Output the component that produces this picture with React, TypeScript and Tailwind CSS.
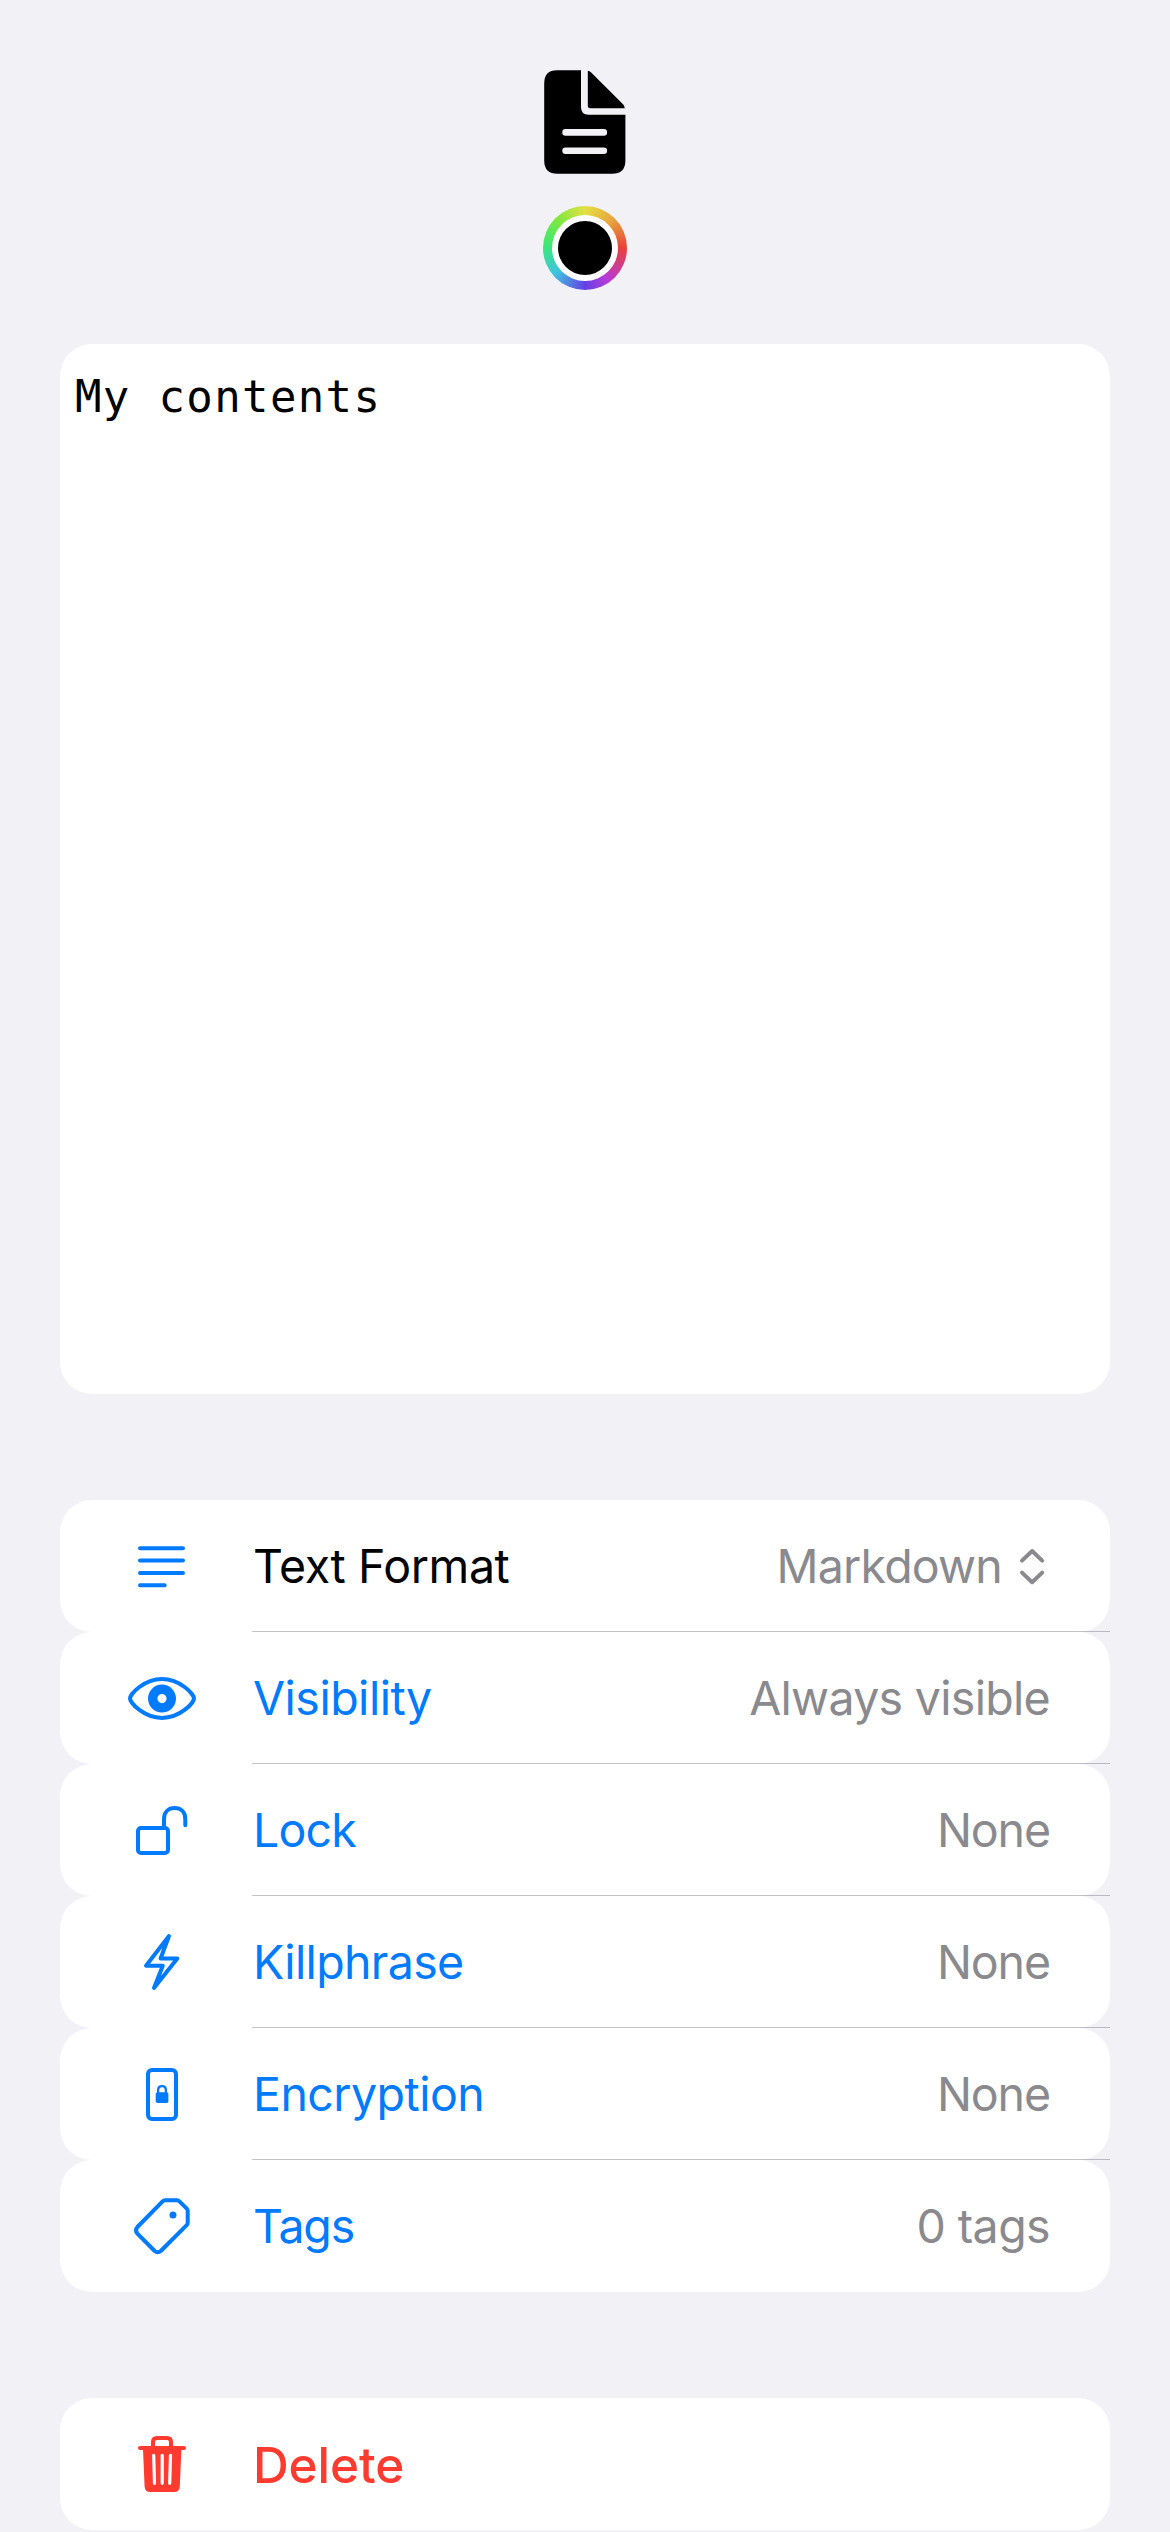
import type { ReactNode } from "react";

const stroke = {
  fill: "none",
  stroke: "currentColor",
  strokeWidth: 4,
  strokeLinecap: "round" as const,
  strokeLinejoin: "round" as const,
};

function Glyph({ children }: { children: ReactNode }) {
  return (
    <svg viewBox="0 0 72 72" className="ml-[66px] h-[72px] w-[72px] shrink-0">
      {children}
    </svg>
  );
}

const TextIcon = () => (
  <Glyph>
    <path {...stroke} d="M14 18.3H57M14 30.6H57M14 42.9H57M14 55.2H38.7" />
  </Glyph>
);

const EyeIcon = () => (
  <Glyph>
    <path
      {...stroke}
      d="M4 36.4C4 32.5 17.5 17 36 17S68 32.5 68 36.4C68 40.4 54.5 55.9 36 55.9S4 40.4 4 36.4Z"
    />
    <circle cx="36" cy="36.6" r="9.3" fill="none" stroke="currentColor" strokeWidth="9.4" />
  </Glyph>
);

const LockIcon = () => (
  <Glyph>
    <rect {...stroke} x="12" y="34" width="30" height="25" rx="3" />
    <path {...stroke} d="M38 34V25C38 18 42.5 14 48.7 14S59.3 18 59.3 25V31.2" />
  </Glyph>
);

const BoltIcon = () => (
  <Glyph>
    <path {...stroke} d="M43 10L20 39.7H36.8L28 62L51.3 32.5H34.6Z" />
  </Glyph>
);

const PhoneLockIcon = () => (
  <Glyph>
    <rect {...stroke} x="22" y="12" width="28" height="49" rx="4" />
    <rect x="29.7" y="34.2" width="12.7" height="10.8" rx="1.8" fill="currentColor" />
    <path
      d="M32.1 35.5V32.5C32.1 29.8 33.8 28.2 36 28.2S39.9 29.8 39.9 32.5V35.5"
      fill="none"
      stroke="currentColor"
      strokeWidth="2.3"
    />
  </Glyph>
);

const TagIcon = () => (
  <Glyph>
    <path
      {...stroke}
      d="M39 10.3H51Q52.4 10.3 53.4 11.3L60.8 18.7Q61.7 19.6 61.7 21V32.8Q61.7 34.2 60.7 35.2L34.8 61Q31.7 63.5 28.7 61L11.4 43.6Q8.6 40 11.4 37L36.6 11.3Q37.6 10.3 39 10.3Z"
    />
    <circle cx="47" cy="25" r="3.5" fill="currentColor" />
  </Glyph>
);

const TrashIcon = () => (
  <Glyph>
    <path {...stroke} d="M14 20H58M27 20V14Q27 10 31 10H41Q45 10 45 14V20" />
    <path d="M17 21H55.4L53.8 58.5Q53.4 64 48.2 64H24.2Q19 64 18.6 58.5Z" fill="currentColor" />
    <path
      d="M27.7 27.3L28.5 55.3M36.2 27.3V55.3M44.5 27.3L43.7 55.3"
      fill="none"
      stroke="white"
      strokeWidth="3.2"
      strokeLinecap="round"
    />
  </Glyph>
);

function DocumentIcon() {
  return (
    <svg viewBox="0 0 82 104" className="h-[104px] w-[82px]">
      <path d="M13 .2H37V37Q37 44.8 44.5 44.8H81.4V90.5Q81.4 103.8 68 103.8H13.5Q.2 103.8 .2 90.5V13.5Q.2 .2 13 .2Z" />
      <path d="M43.8 .8Q45.5 .9 47.2 2.5L79 34.2Q80.7 36.2 80.8 38.2H46Q43.8 38.2 43.8 36Z" />
      <path d="M21.6 62.4H59.8M21.6 80.8H59.8" stroke="#f2f1f6" strokeWidth="6.6" strokeLinecap="round" />
    </svg>
  );
}

function ColorWell() {
  return (
    <div className="flex h-[84px] w-[84px] items-center justify-center rounded-full bg-[conic-gradient(#e4e044,#e8a33c_45deg,#e8413a_90deg,#b83ad8_145deg,#6440e4_180deg,#40c4e0_230deg,#3ae67e_270deg,#7ae83e_315deg,#e4e044)]">
      <div className="flex h-[66px] w-[66px] items-center justify-center rounded-full bg-white">
        <div className="h-[54px] w-[54px] rounded-full bg-black" />
      </div>
    </div>
  );
}

type RowProps = {
  icon: ReactNode;
  label: string;
  labelClass: string;
  value?: string;
  valueClass?: string;
  picker?: boolean;
  divider?: boolean;
};

function Row({ icon, label, labelClass, value, valueClass = "", picker, divider }: RowProps) {
  return (
    <div>
      <div className="flex h-[132px] items-center rounded-[32px] bg-white pr-[60px]">
        {icon}
        <span className={`ml-[55px] whitespace-nowrap ${labelClass}`}>{label}</span>
        <div className="ml-auto flex items-center text-[#8a8a8e]">
          <span className={`whitespace-nowrap ${valueClass}`}>{value}</span>
          {picker && (
            <svg viewBox="0 0 28 40" className="mr-[4px] ml-[16px] h-[40px] w-[28px]">
              <path {...stroke} d="M4 14.6L14.1 5L24.2 14.6M4 26.6L14.1 36.2L24.2 26.6" />
            </svg>
          )}
        </div>
      </div>
      {divider && <div className="-mt-px ml-[192px] h-px bg-[#3c3c434d]" />}
    </div>
  );
}

const blue = "text-[#007aff]";

export default function App() {
  return (
    <div className="flex h-[2532px] w-[1170px] flex-col overflow-hidden bg-[#f2f1f6] px-[60px] pt-[70px] font-['Inter',sans-serif] text-[46.5px] leading-[60px]">
      <div className="flex flex-col items-center gap-8">
        <DocumentIcon />
        <ColorWell />
      </div>

      <div className="mt-[54px] h-[1050px] shrink-0 rounded-[32px] bg-white px-[15px] pt-[23px] font-['DejaVu_Sans_Mono',monospace] text-[44px] tracking-[1.35px] text-black">
        My contents
      </div>

      <div className="mt-[106px]">
        <Row icon={<span className={blue}><TextIcon /></span>} label="Text Format" labelClass="text-black tracking-[-0.4px]" value="Markdown" valueClass="tracking-[-0.8px]" picker divider />
        <Row icon={<span className={blue}><EyeIcon /></span>} label="Visibility" labelClass="text-[#007aff] tracking-[-0.5px]" value="Always visible" valueClass="tracking-[-0.7px]" divider />
        <Row icon={<span className={blue}><LockIcon /></span>} label="Lock" labelClass="text-[#007aff] tracking-[-0.8px]" value="None" valueClass="tracking-[-1.1px]" divider />
        <Row icon={<span className={blue}><BoltIcon /></span>} label="Killphrase" labelClass="text-[#007aff] tracking-[-0.65px]" value="None" valueClass="tracking-[-1.1px]" divider />
        <Row icon={<span className={blue}><PhoneLockIcon /></span>} label="Encryption" labelClass="text-[#007aff] tracking-[-0.55px]" value="None" valueClass="tracking-[-1.1px]" divider />
        <Row icon={<span className={blue}><TagIcon /></span>} label="Tags" labelClass="text-[#007aff] tracking-[-1.2px]" value="0 tags" valueClass="tracking-[-0.6px]" />
      </div>

      <div className="mt-[106px]">
        <Row icon={<span className="text-[#ff3b30]"><TrashIcon /></span>} label="Delete" labelClass="pt-0.5 text-[#ff3b30] text-[49.5px] font-medium tracking-[-0.1px]" />
      </div>
    </div>
  );
}
